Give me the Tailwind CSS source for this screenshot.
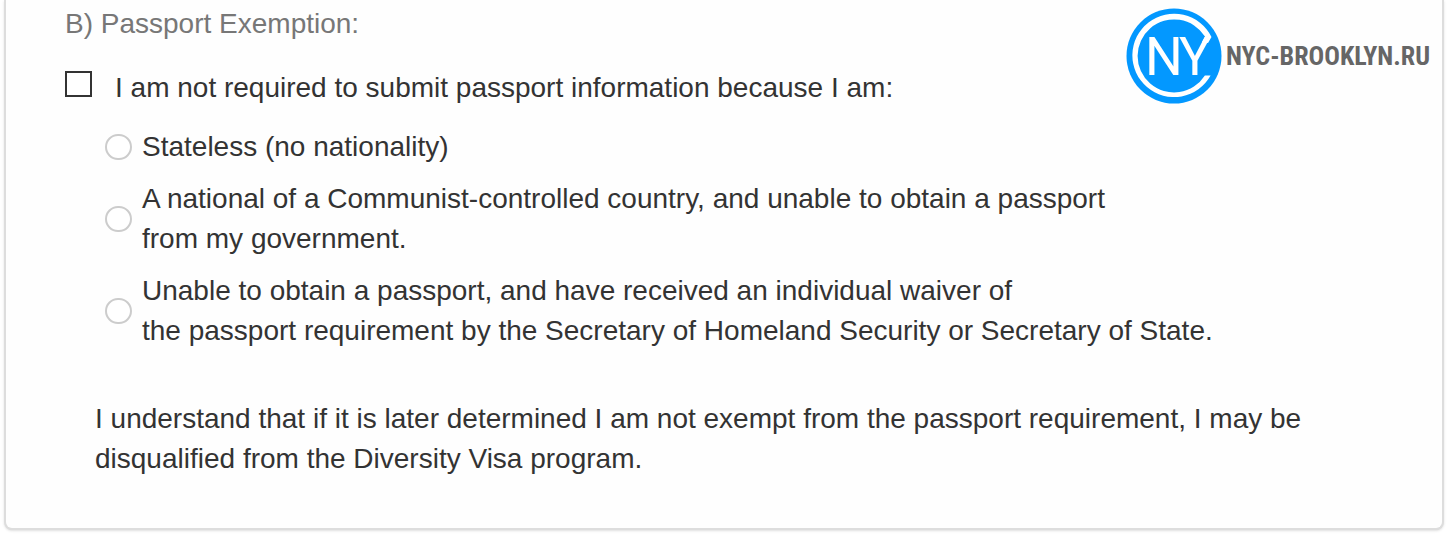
<!DOCTYPE html>
<html lang="en">
<head>
    <meta charset="UTF-8">
    <meta name="viewport" content="width=device-width, initial-scale=1.0">
    <title>Passport Exemption</title>
    <script src="https://cdn.jsdelivr.net/npm/@tailwindcss/browser@4"></script>
</head>
<body class="bg-white px-1 pb-1.5 font-['Liberation_Sans',Arial,sans-serif] text-[28px] leading-10 text-[#333]">
    <main class="relative rounded-b-lg border-2 border-t-0 border-[#ddd] bg-[#fefefe] px-[59px] pt-1 pb-[49px] shadow-sm">
        <!-- Site logo -->
        <a href="#" aria-label="NYC-Brooklyn.ru" class="absolute top-2 right-3 flex items-center gap-1">
            <svg class="size-24" viewBox="0 0 96 96" aria-hidden="true">
                <circle cx="48" cy="48" r="47.5" fill="#0398ff"/>
                <!-- open ring, runs into the right arm of the Y -->
                <path d="M85.5 29 A41.7 41.7 0 1 0 84.6 67.5 H78.9 A36.5 36.5 0 1 1 79 28.5 L76 34 L82 35 Z" fill="#fff"/>
                <text x="19 53" y="67" font-size="53" fill="#fff" font-family="Roboto, sans-serif">NY</text>
            </svg>
            <span class="font-['Roboto_Condensed','Liberation_Sans_Narrow',sans-serif] text-[26px] font-bold text-[#666]">NYC-BROOKLYN.RU</span>
        </a>

        <form>
            <h2 class="text-[#777]">B) Passport Exemption:</h2>

            <div class="mt-6 flex items-start gap-[23px]">
                <input type="checkbox" id="exempt" class="mt-[3px] h-[26px] w-[27px] shrink-0 appearance-none border-2 border-[#333] bg-white checked:bg-[#333]">
                <label for="exempt">I am not required to submit passport information because I am:</label>
            </div>

            <fieldset aria-label="Reason for exemption" class="mt-[19px] space-y-3 pl-10">
                <div class="flex items-center gap-2.5">
                    <input type="radio" name="reason" id="stateless" class="h-[26px] w-[27px] shrink-0 appearance-none rounded-full border-2 border-[#ccc] bg-white checked:bg-[#333]">
                    <label for="stateless">Stateless (no nationality)</label>
                </div>
                <div class="flex items-center gap-2.5">
                    <input type="radio" name="reason" id="communist" class="h-[26px] w-[27px] shrink-0 appearance-none rounded-full border-2 border-[#ccc] bg-white checked:bg-[#333]">
                    <label for="communist">A national of a Communist-controlled country, and unable to obtain a passport<br>from my government.</label>
                </div>
                <div class="flex items-center gap-2.5">
                    <input type="radio" name="reason" id="waiver" class="h-[26px] w-[27px] shrink-0 appearance-none rounded-full border-2 border-[#ccc] bg-white checked:bg-[#333]">
                    <label for="waiver">Unable to obtain a passport, and have received an individual waiver of<br>the passport requirement by the Secretary of Homeland Security or Secretary of State.</label>
                </div>
            </fieldset>

            <p class="mt-12 pl-[30px]">I understand that if it is later determined I am not exempt from the passport requirement, I may be<br>disqualified from the Diversity Visa program.</p>
        </form>
    </main>
</body>
</html>
